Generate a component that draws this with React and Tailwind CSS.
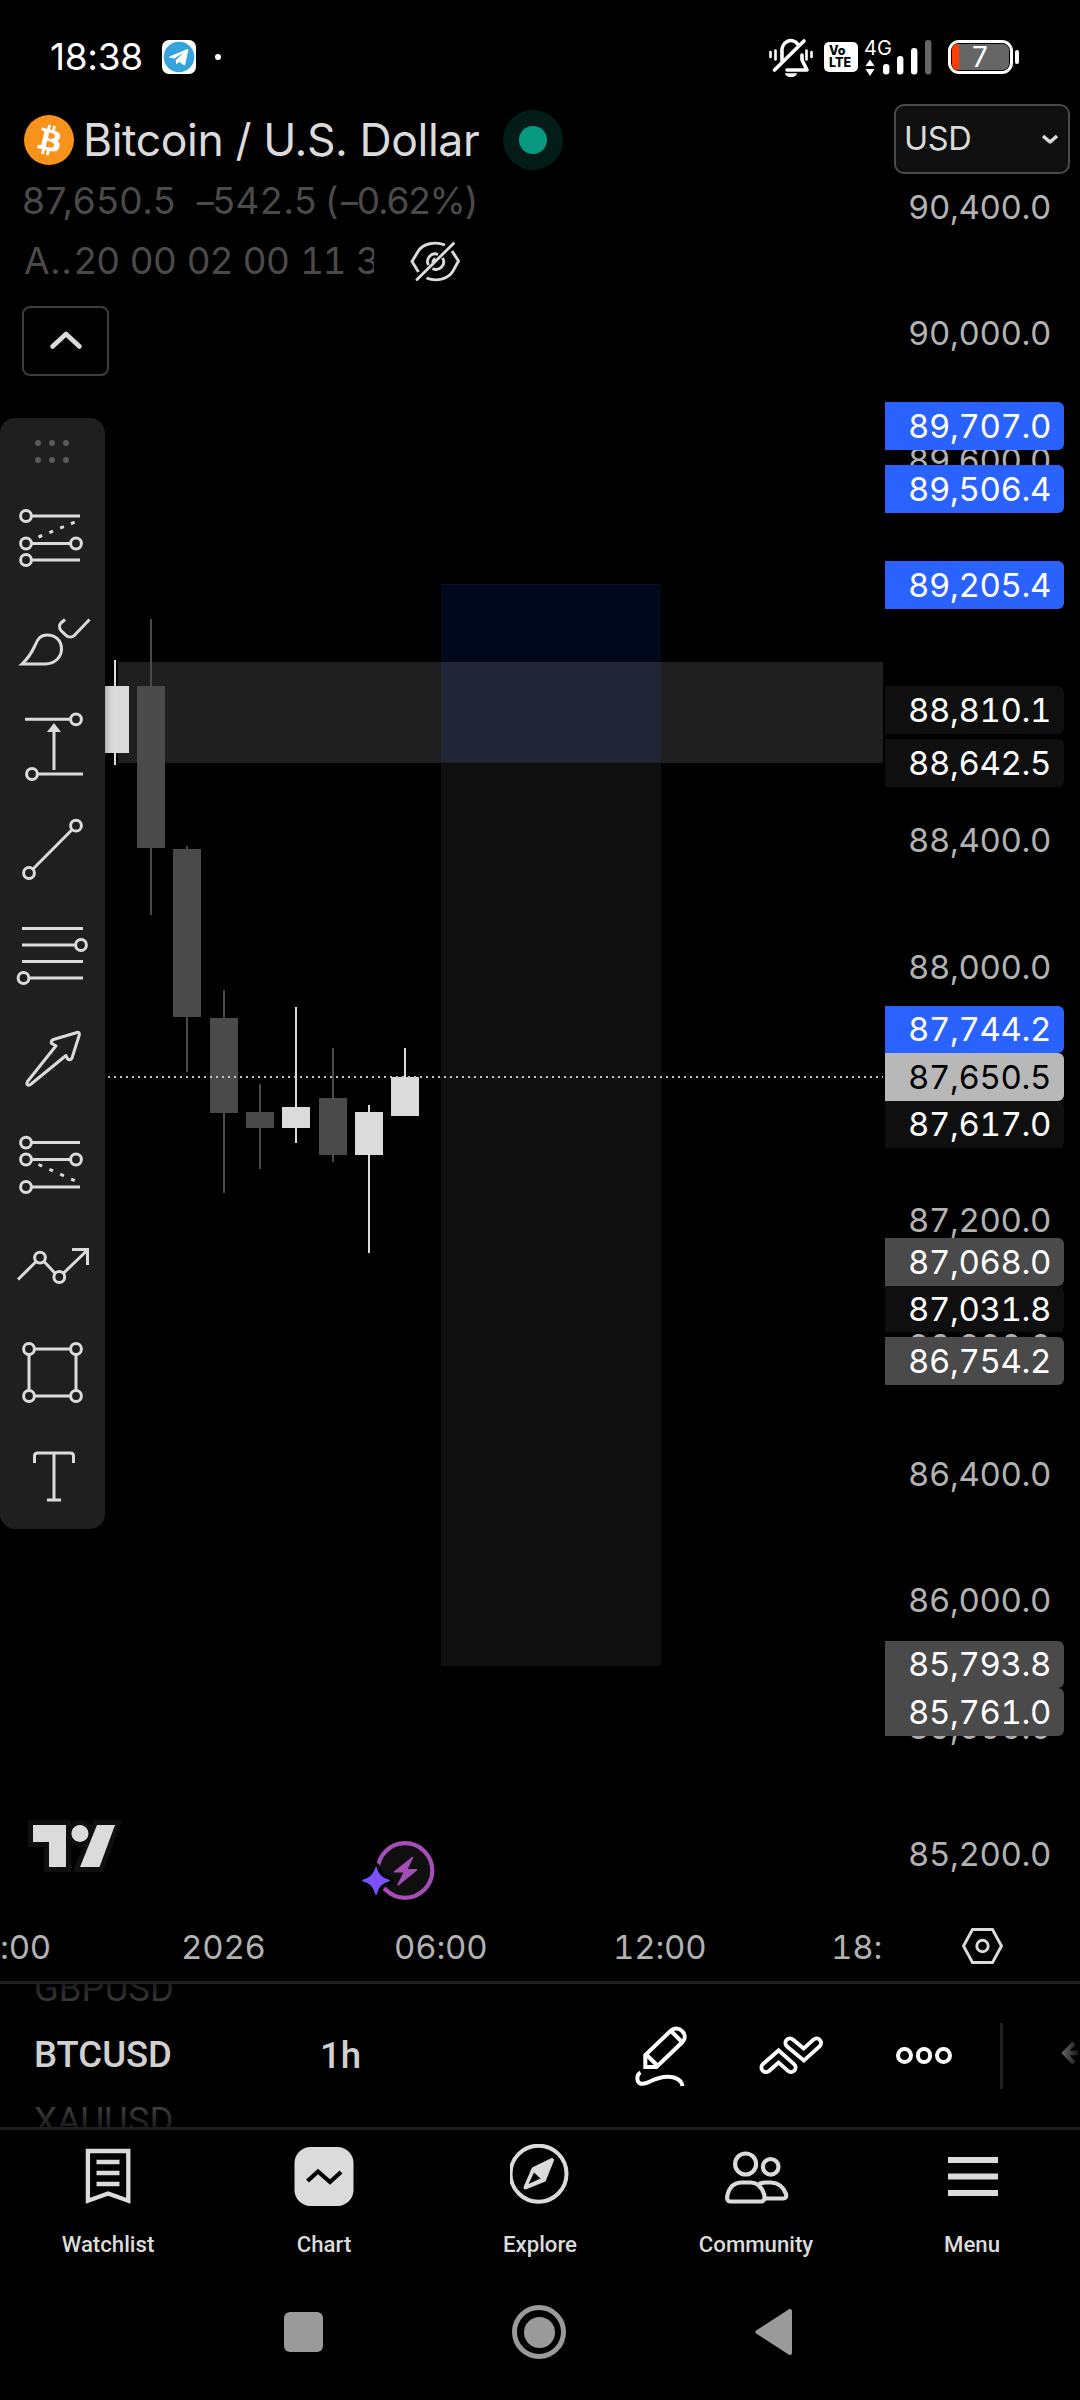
import React from 'react';

const AXIS_TOP = 104;

const gridPrices = [
  ['90,400.0', 207], ['90,000.0', 333], ['89,600.0', 460], ['88,400.0', 840], ['88,000.0', 967],
  ['87,200.0', 1220], ['86,800.0', 1346], ['86,400.0', 1474], ['86,000.0', 1600], ['85,600.0', 1727], ['85,200.0', 1854],
];

const BLUE = 'bg-[#2962ff] text-white';
const DARK = 'bg-[#0f0f0f] text-white';
const GRAY = 'bg-[#4a4a4a] text-white';
const LIGHT = 'bg-[#b8b8b8] text-black';

const tags = [
  ['89,707.0', 402, 48, BLUE], ['89,506.4', 465, 48, BLUE], ['89,205.4', 561, 48, BLUE],
  ['88,810.1', 686, 48, DARK], ['88,642.5', 739, 48, DARK],
  ['87,744.2', 1006, 47, BLUE], ['87,650.5', 1053, 48, LIGHT], ['87,617.0', 1101, 47, DARK],
  ['87,068.0', 1238, 48, GRAY], ['87,031.8', 1286, 46, DARK], ['86,754.2', 1337, 48, GRAY],
  ['85,793.8', 1641, 47, GRAY], ['85,761.0', 1688, 48, GRAY],
];

// [body left, body top, body bottom, wick top, wick bottom, rising]
const candles = [
  [101, 686, 753, 660, 765, true],
  [137, 686, 848, 619, 915, false],
  [173, 849, 1017, 846, 1072, false],
  [210, 1018, 1113, 990, 1193, false],
  [246, 1112, 1128, 1084, 1169, false],
  [282, 1107, 1128, 1007, 1143, true],
  [319, 1098, 1155, 1048, 1162, false],
  [355, 1112, 1155, 1105, 1253, true],
  [391, 1077, 1116, 1048, 1077, true],
];

function StatusBar() {
  return (
    <header className="flex h-[104px] items-center pt-[10px] pl-[50px] text-white">
      <div className="w-[112px] text-[37px] leading-[48px] tracking-[-0.3px]">18:38</div>
      <svg className="h-[34px] w-[34px]" viewBox="0 0 34 34">
        <rect width="34" height="34" rx="7" fill="#fff" />
        <circle cx="17" cy="17" r="15.3" fill="#36a4dc" />
        <path d="M7.5 16.500 25 9.300c1-.4 1.400.1 1.200 1.100l-3 14c-.2 1-.9 1.200-1.700.7l-4.400-3.300-2.200 2.100c-.4.4-.9.3-.9-.4l-.2-3.600 8-7.300-9.800 6.200-4.400-1.400c-.8-.2-.8-.7-.1-.9z" fill="#fff" />
      </svg>
      <div className="ml-[19px] h-[6px] w-[6px] rounded-full bg-white" />
      <svg className="ml-[547px] h-[40px] w-[46px]" viewBox="769 37 46 40" fill="none" stroke="#fff" strokeWidth="3.6" strokeLinecap="round">
        <path d="M783 61V52a9 10 0 0 1 16-7.5M803 55v5l5 10H788" strokeLinejoin="round" />
        <path d="M775.5 70 805 41" />
        <path d="M771.5 52v5M776.5 50.5v9M807.5 50.5v9M812.5 52v5" strokeWidth="2.6" />
        <path d="M786 73.2h12a6 4 0 0 1-12 0z" fill="#fff" stroke="none" />
      </svg>
      <div className="ml-[10px] flex h-[30px] w-[34px] flex-col justify-center rounded-[5px] bg-white pl-[5px] text-[12.5px] leading-[12px] font-extrabold text-black">
        <span>Vo</span>
        <span>LTE</span>
      </div>
      <div className="relative ml-[6px] h-[40px] w-[68px]">
        <svg className="h-[40px] w-[68px]" viewBox="865 37 68 40">
          <path d="M871 59.500l4.500 6.500h-9zM871 76l4.500-7h-9z" fill="#fff" />
          <rect x="884" y="64" width="6.400" height="10.500" rx="3" fill="#fff" />
          <rect x="898" y="56" width="6.400" height="18.500" rx="3" fill="#fff" />
          <rect x="912" y="48" width="6.400" height="26.500" rx="3" fill="#fff" />
          <rect x="926" y="40" width="6.400" height="34.500" rx="3" fill="#666" />
        </svg>
        <span className="absolute top-0 left-0 text-[20px] leading-[22px]">4G</span>
      </div>
      <div className="ml-[16px] flex h-[34px] w-[65px] rounded-[11px] border-[3px] border-white p-px">
        <div className="flex flex-1 rounded-[6px] bg-[#666]">
          <div className="w-[7px] rounded-l-[6px] bg-[#ff3d00]" />
          <div className="flex-1 pl-[13px] text-[28px] leading-[27px]">7</div>
        </div>
      </div>
      <div className="ml-[2px] h-[14px] w-[4px] rounded-[2px] bg-white" />
    </header>
  );
}

function PricePlot() {
  return (
    <svg className="absolute inset-0 h-[1796px] w-[885px]" viewBox="0 104 885 1796" shapeRendering="crispEdges">
      <rect x="118" y="662" width="765" height="101" fill="#1f1f1f" />
      <rect x="441" y="584" width="220" height="78" fill="#02081b" />
      <rect x="441" y="584" width="220" height="1" fill="#06102c" />
      <rect x="441" y="662" width="220" height="100" fill="#212538" />
      <rect x="441" y="763" width="220" height="903" fill="#0f0f0f" />
      {candles.map(([x, top, bottom, high, low, up]) => (
        <g key={x} fill={up ? '#dbdbdb' : '#4a4a4a'}>
          <rect x={x + 13} y={high} width="2" height={low - high} />
          <rect x={x} y={top} width="28" height={bottom - top} />
        </g>
      ))}
      <path d="M108 1077H883" stroke="#c4c4c4" strokeWidth="2" strokeDasharray="2 4" />
    </svg>
  );
}

const toolIcons = [
  <>
    <circle cx="26" cy="516" r="5.400" /><path d="M32 516H80" />
    <path d="M38.500 537 76.500 521.500" strokeDasharray="4 7.700" />
    <circle cx="26" cy="543.500" r="5.400" /><path d="M32 543.500H70" /><circle cx="76" cy="543.500" r="5.400" />
    <circle cx="26" cy="560" r="5.400" /><path d="M32 560H80" />
  </>,
  <>
    <path d="M22 664H45C55 664 61.500 657 61.500 649 61.500 640 55 635 47 635 40 635 37.500 639.500 35 645.500 32 652 28 658.500 22 664Z" />
    <path d="M65 619.500 61.500 622.500C59 624.700 59 628 61 630.500L66 635.300C68.500 637.600 72 637.600 74.500 635.300L89.500 619.500" />
  </>,
  <>
    <path d="M25 719.300H70M54 730V770M38 774H83" /><circle cx="76" cy="719.300" r="5.400" /><circle cx="32" cy="774" r="5.400" />
    <path d="M54 723 61 732H47Z" fill="#dbdbdb" stroke="none" />
  </>,
  <><circle cx="76" cy="825.700" r="5.400" /><circle cx="29" cy="873" r="5.400" /><path d="M72 829.700 33 869" /></>,
  <>
    <path d="M22 928.600H83M22 945H75M22 961.400H83M30 978H83" /><circle cx="81" cy="945" r="5.400" /><circle cx="23.500" cy="978" r="5.400" />
  </>,
  <path strokeLinejoin="round" d="M77 1032.500 53.500 1039.500C50.500 1040.800 50.500 1043.300 53 1044.200L56 1045.800 27.500 1081.500C26 1084.500 28 1086 30.500 1084.500L66 1055.500 67.500 1058.800C69 1060.500 71 1060 72 1058L79.300 1035C79.600 1033 78.800 1032 77 1032.500Z" />,
  <>
    <circle cx="26" cy="1142.600" r="5.400" /><path d="M32 1142.600H80M32 1159.500H70M32 1187H80" />
    <circle cx="26" cy="1159.500" r="5.400" /><circle cx="76" cy="1159.500" r="5.400" />
    <path d="M38.500 1164.500 76.500 1181.500" strokeDasharray="4 7.900" />
    <circle cx="26" cy="1187" r="5.400" />
  </>,
  <>
    <path d="M18 1279.500 35.700 1262M44 1261.500 55 1273.200M63.500 1273.200 87 1250.500M72 1249.500H87.500V1265" />
    <circle cx="40" cy="1257.600" r="5.400" /><circle cx="59.300" cy="1277" r="5.400" />
  </>,
  <>
    <circle cx="29" cy="1349" r="5.400" /><circle cx="76" cy="1349" r="5.400" /><circle cx="29" cy="1396" r="5.400" /><circle cx="76" cy="1396" r="5.400" />
    <path d="M34.500 1349H70.500M34.500 1396H70.500M29 1354.500V1390.500M76 1354.500V1390.500" />
  </>,
  <path d="M34.500 1463V1456Q34.500 1453 37.500 1453H70.500Q73.500 1453 73.500 1456V1463M54 1453V1500M47 1500H61" />,
];

function DrawingToolbar() {
  return (
    <aside className="absolute top-[314px] left-0 flex h-[1111px] w-[105px] flex-col rounded-[15px] bg-[#1f1f1f] shadow-[0_0_8px_rgba(0,0,0,0.4)]">
      <div className="flex h-[68px] justify-center pt-[22px] pr-px">
        <div className="grid h-[23px] grid-cols-3 content-between gap-x-[8px]">
          {[0, 1, 2, 3, 4, 5].map((i) => <i key={i} className="h-[6px] w-[6px] rounded-full bg-[#5a5a5a]" />)}
        </div>
      </div>
      {toolIcons.map((icon, i) => (
        <svg key={i} className="h-[104px] w-[105px]" viewBox={`0 ${486 + i * 104} 105 104`} fill="none" stroke="#dbdbdb" strokeWidth="3">
          {icon}
        </svg>
      ))}
    </aside>
  );
}

function Legend() {
  return (
    <div className="relative pt-[10px]">
      <div className="flex h-[52px] items-center pl-[24px]">
        <svg className="h-[50px] w-[50px]" viewBox="0 0 32 32">
          <circle cx="16" cy="16" r="16" fill="#f7931a" />
          <path fill="#fff" fillRule="evenodd" d="M23.189 14.020c.314-2.096-1.283-3.223-3.465-3.975l.708-2.840-1.728-.43-.69 2.765c-.454-.114-.92-.22-1.385-.326l.695-2.783L15.596 6l-.708 2.839c-.376-.086-.746-.17-1.104-.26l.002-.009-2.384-.595-.46 1.846s1.283.294 1.256.312c.7.175.826.638.805 1.006l-.806 3.235c.048.012.11.030.18.057l-.183-.045-1.130 4.532c-.086.212-.303.531-.793.410.018.025-1.256-.313-1.256-.313l-.858 1.978 2.250.561c.418.105.828.215 1.231.318l-.715 2.872 1.727.43.708-2.840c.472.127.930.245 1.378.357l-.706 2.828 1.728.43.715-2.866c2.948.558 5.164.333 6.097-2.333.752-2.146-.037-3.385-1.588-4.192 1.130-.26 1.980-1.003 2.207-2.538zm-3.950 5.538c-.533 2.147-4.148.986-5.320.695l.950-3.805c1.172.293 4.929.872 4.370 3.110zm.535-5.569c-.487 1.953-3.495.960-4.470.717l.860-3.450c.975.243 4.118.696 3.610 2.733z" />
        </svg>
        <h1 className="ml-[9px] w-[420px] text-[44.5px] leading-[52px] tracking-[-0.4px] whitespace-nowrap text-[#dbdbdb]">Bitcoin / U.S. Dollar</h1>
        <div className="flex h-[60px] w-[60px] items-center justify-center rounded-full bg-[#031c17]">
          <div className="h-[28px] w-[28px] rounded-full bg-[#089981]" />
        </div>
      </div>
      <div className="flex h-[69px] items-center pl-[22px] text-[37px] tracking-[0.6px] whitespace-nowrap text-[#4a4a4a]">
        <span className="w-[171px]">87,650.5</span>
        <span className="w-[132px]"><span className="tracking-[-5px]">−</span>542.5</span>
        <span className="tracking-[-1.2px]">(<span className="tracking-[-5px]">−</span>0.62%)</span>
      </div>
      <div className="flex h-[51px] items-center pl-[24px] text-[37px] whitespace-nowrap text-[#4a4a4a]">
        <span className="w-[50px] tracking-[0.5px]">A..</span>
        <span className="w-[56px]">20</span>
        <span className="w-[57px]">00</span>
        <span className="w-[56px]">02</span>
        <span className="w-[57px]">00</span>
        <span className="w-[56px] tracking-[-1.5px] tabular-nums">11</span>
        <span className="w-[18px] overflow-hidden">3</span>
        <svg className="ml-[36px] h-[44px] w-[50px]" viewBox="410 239.500 50 44" fill="none" stroke="#dbdbdb" strokeWidth="2.900">
          <path d="M445 245.500C435 241.500 423 244 418 252L412 262 418.500 272.500M426.500 278.500C436 282.500 448 280 453 271.500L458.500 261.500 452 251.500" />
          <path d="M417 280 453.500 244" strokeLinecap="round" />
          <path d="M428.500 265.500A7.500 7.500 0 0 1 438 255M442.500 258.500A7.500 7.500 0 0 1 432.500 269" />
          <path d="M433 263A3 3 0 0 1 435.500 259.500" />
        </svg>
      </div>
      <button className="mt-[20px] ml-[22px] flex h-[70px] w-[87px] items-center justify-center rounded-[8px] border-2 border-[#3d3d3d] pb-[2px]">
        <svg className="h-[24px] w-[36px]" viewBox="0 0 36 24" fill="none" stroke="#dbdbdb" strokeWidth="4.600" strokeLinecap="round" strokeLinejoin="round">
          <path d="M4.500 18.500 18 6 31.500 18.500" />
        </svg>
      </button>
    </div>
  );
}

function ChartMarks() {
  return (
    <>
      <svg className="absolute top-[1711px] left-[25px] h-[64px] w-[100px]" viewBox="25 1815 100 64">
        <path d="M33 1825H66V1867H49V1842H33ZM97 1825H115L99.500 1867H80ZM80 1825a8.500 8.500 0 1 1-.1 0z" stroke="#0f0f0f" strokeWidth="10" fill="#0f0f0f" />
        <path d="M33 1825H66V1867H49V1842H33ZM97 1825H115L99.500 1867H80ZM80 1825a8.500 8.500 0 1 1-.1 0z" fill="#dbdbdb" />
      </svg>
      <svg className="absolute top-[1731px] left-[355px] h-[72px] w-[84px]" viewBox="355 1835 84 72">
        <circle cx="405" cy="1870.500" r="27.300" fill="#0f0f0f" stroke="#a64db8" strokeWidth="4.200" />
        <path d="M412.500 1857.500 394.500 1871.800H404.500L398 1885 416.500 1869.800H406.500Z" fill="#a64db8" stroke="#a64db8" strokeWidth="1.500" strokeLinejoin="round" />
        <path d="M376 1867Q378.500 1878 390 1880.500 378.500 1883 376 1895 373.500 1883 362 1880.500 373.500 1878 376 1867Z" fill="#7a52ff" stroke="#050505" strokeWidth="8" strokeLinejoin="round" paintOrder="stroke" />
        <path d="M376 1868Q378.500 1878 389 1880.500 378.500 1883 376 1894 373.500 1883 363 1880.500 373.500 1878 376 1868Z" fill="#7a52ff" stroke="#7a52ff" strokeWidth="1.500" strokeLinejoin="round" />
      </svg>
    </>
  );
}

function PriceAxis() {
  return (
    <div className="relative w-[195px] text-[33px] tracking-[-0.4px] whitespace-nowrap tabular-nums">
      {gridPrices.map(([label, y]) => (
        <div key={label} className="absolute right-0 left-[23px] h-[48px] leading-[48px] text-[#b2b2b2]" style={{ top: y - 24 - AXIS_TOP }}>{label}</div>
      ))}
      {tags.map(([label, y, h, tone]) => (
        <div key={label} className={`absolute left-0 flex w-[179px] items-center rounded-r-[6px] pt-px pl-[23px] ${tone}`} style={{ top: y - AXIS_TOP, height: h }}>{label}</div>
      ))}
      <button className="relative ml-[9px] flex h-[70px] w-[176px] items-center justify-between rounded-[10px] border-2 border-[#4a4a4a] bg-[#0f0f0f] pr-[9px] pl-[8px] text-[#dbdbdb]">
        <span className="pt-px text-[32.500px]">USD</span>
        <svg className="h-[14px] w-[18px]" viewBox="0 0 18 14" fill="none" stroke="#dbdbdb" strokeWidth="3.500" strokeLinejoin="round">
          <path d="M2 4 9 10 16 4" />
        </svg>
      </button>
    </div>
  );
}

function TimeAxis() {
  return (
    <div className="flex h-[81px] items-center pt-[13px] text-[33px] leading-[68px] tracking-[-0.2px] whitespace-nowrap text-[#b2b2b2]">
      <div className="w-[181px] tabular-nums">:00</div>
      <div className="w-[213px] tabular-nums">2026</div>
      <div className="w-[219px] tabular-nums">06:00</div>
      <div className="w-[218px] tabular-nums">12:00</div>
      <div className="w-[130px] tabular-nums">18:</div>
      <svg className="h-[40px] w-[43px]" viewBox="961 1926 43 40" fill="none" stroke="#dbdbdb" strokeWidth="2.900">
        <path d="M972.500 1928.500H992.500L1001.500 1945 992.500 1961.500H972.500L963.500 1945Z" />
        <circle cx="982.500" cy="1945" r="5.700" />
      </svg>
    </div>
  );
}

function SymbolBar() {
  return (
    <div className="flex h-[149px] items-center border-y-[3px] border-[#1f1f1f] font-['Roboto'] text-[36.500px] whitespace-nowrap">
      <div className="relative flex h-[143px] w-[320px] flex-col justify-center overflow-hidden pl-[34px]">
        {['GBPUSD', 'BTCUSD', 'XAUUSD'].map((s) => (
          <div key={s} className={s === 'BTCUSD' ? 'h-[66px] shrink-0 leading-[64px] font-medium text-[#d0d0d0]' : 'h-[66px] shrink-0 leading-[64px] text-[#444]'}>{s}</div>
        ))}
        <div className="absolute inset-x-0 top-0 h-[24px] bg-linear-to-b from-black/60 to-transparent" />
        <div className="absolute inset-x-0 bottom-0 h-[24px] bg-linear-to-t from-black/60 to-transparent" />
      </div>
      <div className="w-[310px] leading-[64px] font-medium text-[#d0d0d0]">1h</div>
      <svg className="h-[72px] w-[60px]" viewBox="630 2020 60 72" fill="none" stroke="#fff" strokeWidth="4" strokeLinejoin="miter">
        <path d="M645.300 2067V2055L671 2030.500C674 2027.500 679 2027.800 682 2031 685.500 2034.500 685.500 2039 682.500 2042L656.500 2067Z" />
        <path d="M646 2054.500 658.500 2066.500M671 2031 682 2042" />
        <path d="M640.500 2072.500C637.500 2074 636.500 2078 638 2081.500 640 2085 645 2084 650 2081.500 659 2077 667 2075.500 674 2077.500 679 2079 682 2082 682.500 2086" />
      </svg>
      <svg className="ml-[66px] h-[50px] w-[72px]" viewBox="756 2030 72 50" fill="none" strokeLinecap="round">
        <path d="M766 2066.500 778.600 2055.500 791 2066.500M790 2042 803.800 2053.500 816.500 2042" stroke="#fff" strokeWidth="13" />
        <path d="M766 2066.500 778.600 2055.500 791 2066.500M790 2042 803.800 2053.500 816.500 2042" stroke="#000" strokeWidth="5.200" />
      </svg>
      <div className="ml-[68px] flex gap-[3px]">
        {[0, 1, 2].map((i) => <i key={i} className="h-[16.500px] w-[16.500px] rounded-full border-[4px] border-white" />)}
      </div>
      <div className="ml-[48px] h-[66px] w-[3px] bg-[#1f1f1f]" />
      <svg className="mb-[6px] ml-[58px] h-[26px] w-[19px]" viewBox="1061 2039 19 26" fill="none" strokeWidth="4.500">
        <defs>
          <linearGradient id="fade" gradientUnits="userSpaceOnUse" x1="1061" x2="1080" y1="0" y2="0">
            <stop stopColor="#6a6a6a" /><stop offset="1" stopColor="#111" />
          </linearGradient>
        </defs>
        <path d="M1074 2042 1064.500 2052 1074 2062M1065 2052.010 1078 2052" stroke="url(#fade)" />
      </svg>
    </div>
  );
}

const navItems = [
  ['Watchlist', (
    <svg className="h-[60px] w-[60px]" viewBox="77.500 2147 60 60" fill="none" stroke="#dbdbdb" strokeWidth="4.300">
      <path d="M87.400 2151H127.800V2200.800L107.600 2193.500 87.400 2200.800ZM96 2162H119M96 2173H119M96 2184H119" />
    </svg>
  )],
  ['Chart', (
    <svg className="h-[60px] w-[60px]" viewBox="293.500 2147 60 60">
      <rect x="294" y="2147" width="59" height="59" rx="16" fill="#dbdbdb" />
      <path d="M307 2181 317.500 2171.500 329.500 2182 340.500 2172" fill="none" stroke="#000" strokeWidth="4.200" />
    </svg>
  )],
  ['Explore', (
    <svg className="h-[60px] w-[60px]" viewBox="509.500 2144 60 60">
      <circle cx="538" cy="2173.700" r="28" fill="none" stroke="#dbdbdb" strokeWidth="4" />
      <path d="M551.500 2160 533 2169 525 2187.500 543.500 2180Z" fill="#dbdbdb" stroke="#dbdbdb" strokeWidth="4" strokeLinejoin="round" />
      <path d="M533.500 2172.500 540 2178.500 528 2184Z" fill="#000" />
    </svg>
  )],
  ['Community', (
    <svg className="h-[60px] w-[66px]" viewBox="723 2147 66 60" fill="none" stroke="#dbdbdb" strokeWidth="4.200">
      <circle cx="745.600" cy="2164" r="10.500" /><circle cx="770.700" cy="2166.800" r="7.800" />
      <path d="M730 2201.500Q726.500 2201 727.300 2196 730 2182.500 742 2182.500H751Q761 2183 764.300 2195 765.500 2201.500 761 2201.500Z" strokeLinejoin="round" />
      <path d="M759 2184Q762 2182.500 766 2182.500H771Q782 2183 786 2194 787 2198.500 783 2198.500H765" />
    </svg>
  )],
  ['Menu', (
    <svg className="h-[60px] w-[60px]" viewBox="942 2147 60 60">
      <path d="M948 2160H998M948 2176.500H998M948 2193H998" stroke="#dbdbdb" strokeWidth="6" />
    </svg>
  )],
];

function BottomNav() {
  return (
    <nav className="grid h-[131px] grid-cols-5 pt-[17px] font-['Roboto'] text-[22.200px] font-medium text-[#dbdbdb]">
      {navItems.map(([label, icon]) => (
        <div key={label} className={label === 'Explore' ? '-mt-[3px] flex flex-col items-center gap-[24px]' : 'flex flex-col items-center gap-[21px]'}>
          {icon}
          <span className="leading-[32px]">{label}</span>
        </div>
      ))}
    </nav>
  );
}

function SystemNav() {
  return (
    <div className="flex h-[139px] items-start pt-[44px] pl-[284px]">
      <div className="mt-[7px] h-[40px] w-[39px] rounded-[6px] bg-[#9a9a9a]" />
      <div className="ml-[189px] flex h-[54px] w-[54px] items-center justify-center rounded-full border-[5px] border-[#9a9a9a]">
        <div className="h-[31px] w-[31px] rounded-full bg-[#9a9a9a]" />
      </div>
      <svg className="ml-[189px] h-[54px] w-[38px]" viewBox="755 2305 38 54">
        <path d="M757.500 2332 790 2311V2353Z" fill="#9a9a9a" stroke="#9a9a9a" strokeWidth="4" strokeLinejoin="round" />
      </svg>
    </div>
  );
}

export default function App() {
  return (
    <div className="flex h-[2400px] w-[1080px] flex-col overflow-hidden bg-black font-['Inter','Roboto',sans-serif]">
      <StatusBar />
      <main className="flex h-[1796px]">
        <section className="relative w-[885px]">
          <PricePlot />
          <Legend />
          <DrawingToolbar />
          <ChartMarks />
        </section>
        <PriceAxis />
      </main>
      <TimeAxis />
      <SymbolBar />
      <BottomNav />
      <SystemNav />
    </div>
  );
}
